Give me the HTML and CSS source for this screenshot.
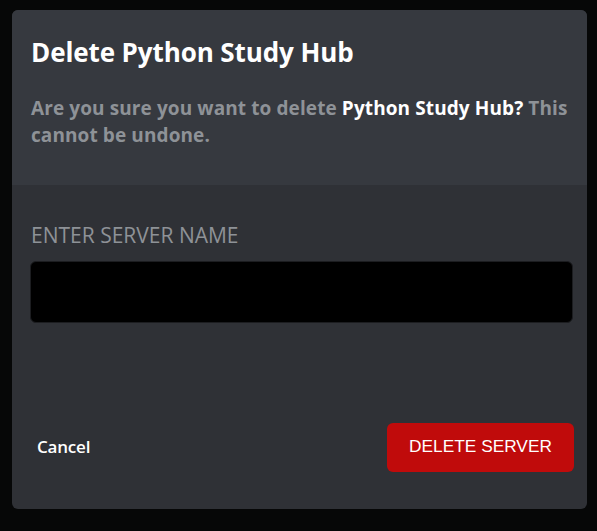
FILE: index.html
```html
<!DOCTYPE html>
<html>
<head>
<meta charset="utf-8">
<link rel="stylesheet" href="styles.css">
</head>
<body>
<div class="modal">
  <div class="header">
    <h1 class="title">Delete Python Study Hub</h1>
    <p class="desc">Are you sure you want to delete <span class="name">Python Study Hub?</span> This cannot be undone.</p>
  </div>
  <div class="body">
    <label class="label">ENTER SERVER NAME</label>
    <div class="input"></div>
    <div class="footer">
      <button class="cancel">Cancel</button>
      <button class="delete">DELETE SERVER</button>
    </div>
  </div>
</div>
</body>
</html>
```
FILE: styles.css
```css
* { box-sizing: border-box; }
html, body { margin: 0; padding: 0; }
body {
  background: #060707;
  width: 597px;
  height: 531px;
  padding: 10px 0 0 12px;
  font-family: "Open Sans", "Noto Sans", sans-serif;
}
.modal {
  width: 575px;
  height: 499px;
  border-radius: 6px;
  overflow: hidden;
  background: #2f3136;
  display: flex;
  flex-direction: column;
}
.header {
  background: #36393f;
  height: 175px;
  padding: 24px 15px 0 19px;
}
.title {
  margin: 0;
  color: #ffffff;
  font-size: 26px;
  line-height: 36px;
  font-weight: 700;
  letter-spacing: -0.1px;
}
.desc {
  margin: 25px 0 0 0;
  color: #8e9297;
  font-size: 19px;
  line-height: 27px;
  font-weight: 700;
  letter-spacing: 0.1px;
}
.desc .name { color: #ffffff; }
.body {
  flex: 1;
  padding: 35px 13px 0 18px;
  display: flex;
  flex-direction: column;
}
.label {
  color: #8e9297;
  font-size: 21px;
  line-height: 30px;
  padding-left: 1px;
}
.input {
  margin-top: 11px;
  height: 62px;
  background: #000000;
  border-radius: 6px;
  border: 1px solid #1c1d20;
  margin-right: 1px;
}
.footer {
  margin-top: 100px;
  display: flex;
  justify-content: space-between;
  align-items: center;
}
.cancel {
  background: none;
  border: none;
  color: #ffffff;
  font-family: "Open Sans", sans-serif;
  font-size: 17px;
  font-weight: 600;
  padding: 0 0 3px 7px;
  letter-spacing: -0.2px;
}
.delete {
  width: 187px;
  height: 49px;
  background: #c00b0b;
  border: none;
  border-radius: 6px;
  color: #ffffff;
  font-family: "Liberation Sans", Arial, sans-serif;
  font-size: 17.3px;
  padding: 0 0 2px 0;
}
```
